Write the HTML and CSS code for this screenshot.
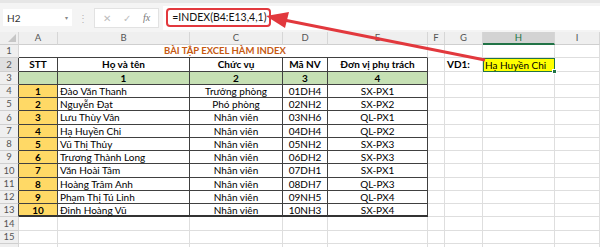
FILE: index.html
```html
<!DOCTYPE html>
<html lang="vi">
<head>
    <meta charset="UTF-8">
    <title>Bài tập Excel hàm INDEX</title>
    <link rel="stylesheet" href="styles.css">
</head>
<body>
    <div class="app">
        <div class="toolbar">
            <div class="namebox"><span>H2</span><span class="caret">▾</span></div>
            <div class="dots">⋮</div>
            <div class="fxbox">
                <span class="btn">✕</span>
                <span class="btn">✓</span>
                <span class="fx">fx</span>
            </div>
            <div class="formula"><span class="mark">=INDEX(B4:E13,4,1)</span></div>
        </div>

        <div class="sheet">
            <!-- column headers -->
            <div class="corner"></div>
            <div class="ch">A</div><div class="ch">B</div><div class="ch">C</div><div class="ch">D</div>
            <div class="ch">E</div><div class="ch">F</div><div class="ch">G</div><div class="ch sel">H</div><div class="ch">I</div>

            <!-- row 1 -->
            <div class="rh">1</div>
            <div class="c title">BÀI TẬP EXCEL HÀM INDEX</div>
            <div class="c"></div><div class="c"></div><div class="c"></div><div class="c"></div>

            <!-- row 2 -->
            <div class="rh dk sel">2</div>
            <div class="c t b mid">STT</div>
            <div class="c t b mid">Họ và tên</div>
            <div class="c t b mid">Chức vụ</div>
            <div class="c t b mid">Mã NV</div>
            <div class="c t b mid">Đơn vị phụ trách</div>
            <div class="c"></div>
            <div class="c b">VD1:</div>
            <div class="c active">Hạ Huyền Chi</div>
            <div class="c"></div>

            <!-- row 3 -->
            <div class="rh dk">3</div>
            <div class="c t green"></div>
            <div class="c t green b mid">1</div>
            <div class="c t green b mid">2</div>
            <div class="c t green b mid">3</div>
            <div class="c t green b mid">4</div>
            <div class="c"></div><div class="c"></div><div class="c"></div><div class="c"></div>

            <!-- rows 4 - 13 -->
            <div class="rh dk">4</div>
            <div class="c t gold b mid">1</div><div class="c t">Đào Văn Thanh</div><div class="c t mid">Trưởng phòng</div><div class="c t mid">01DH4</div><div class="c t mid">SX-PX1</div>
            <div class="c"></div><div class="c"></div><div class="c"></div><div class="c"></div>

            <div class="rh dk">5</div>
            <div class="c t gold b mid">2</div><div class="c t">Nguyễn Đạt</div><div class="c t mid">Phó phòng</div><div class="c t mid">02NH2</div><div class="c t mid">SX-PX2</div>
            <div class="c"></div><div class="c"></div><div class="c"></div><div class="c"></div>

            <div class="rh dk">6</div>
            <div class="c t gold b mid">3</div><div class="c t">Lưu Thùy Vân</div><div class="c t mid">Nhân viên</div><div class="c t mid">03NH6</div><div class="c t mid">QL-PX1</div>
            <div class="c"></div><div class="c"></div><div class="c"></div><div class="c"></div>

            <div class="rh dk">7</div>
            <div class="c t gold b mid">4</div><div class="c t">Hạ Huyền Chi</div><div class="c t mid">Nhân viên</div><div class="c t mid">04DH4</div><div class="c t mid">QL-PX2</div>
            <div class="c"></div><div class="c"></div><div class="c"></div><div class="c"></div>

            <div class="rh dk">8</div>
            <div class="c t gold b mid">5</div><div class="c t">Vũ Thị Thủy</div><div class="c t mid">Nhân viên</div><div class="c t mid">05NH2</div><div class="c t mid">SX-PX3</div>
            <div class="c"></div><div class="c"></div><div class="c"></div><div class="c"></div>

            <div class="rh dk">9</div>
            <div class="c t gold b mid">6</div><div class="c t">Trương Thành Long</div><div class="c t mid">Nhân viên</div><div class="c t mid">06DH2</div><div class="c t mid">SX-PX3</div>
            <div class="c"></div><div class="c"></div><div class="c"></div><div class="c"></div>

            <div class="rh dk">10</div>
            <div class="c t gold b mid">7</div><div class="c t">Văn Hoài Tâm</div><div class="c t mid">Nhân viên</div><div class="c t mid">07DH1</div><div class="c t mid">SX-PX1</div>
            <div class="c"></div><div class="c"></div><div class="c"></div><div class="c"></div>

            <div class="rh dk">11</div>
            <div class="c t gold b mid">8</div><div class="c t">Hoàng Trâm Anh</div><div class="c t mid">Nhân viên</div><div class="c t mid">08DH7</div><div class="c t mid">QL-PX3</div>
            <div class="c"></div><div class="c"></div><div class="c"></div><div class="c"></div>

            <div class="rh dk">12</div>
            <div class="c t gold b mid">9</div><div class="c t">Phạm Thị Tú Linh</div><div class="c t mid">Nhân viên</div><div class="c t mid">09NH5</div><div class="c t mid">QL-PX4</div>
            <div class="c"></div><div class="c"></div><div class="c"></div><div class="c"></div>

            <div class="rh dk">13</div>
            <div class="c t last gold b mid">10</div><div class="c t last">Đinh Hoàng Vũ</div><div class="c t last mid">Nhân viên</div><div class="c t last mid">10NH3</div><div class="c t last mid">SX-PX4</div>
            <div class="c"></div><div class="c"></div><div class="c"></div><div class="c"></div>

            <!-- empty rows -->
            <div class="rh">14</div>
            <div class="c"></div><div class="c"></div><div class="c"></div><div class="c"></div><div class="c"></div>
            <div class="c"></div><div class="c"></div><div class="c"></div><div class="c"></div>

            <div class="rh">15</div>
            <div class="c"></div><div class="c"></div><div class="c"></div><div class="c"></div><div class="c"></div>
            <div class="c"></div><div class="c"></div><div class="c"></div><div class="c"></div>

            <div class="rh"></div>
            <div class="c"></div><div class="c"></div><div class="c"></div><div class="c"></div><div class="c"></div>
            <div class="c"></div><div class="c"></div><div class="c"></div><div class="c"></div>
        </div>

        <!-- red arrow pointing to the formula -->
        <svg class="arrow" width="600" height="247" viewBox="0 0 600 247">
            <line x1="485" y1="60" x2="284" y2="20" stroke="#e2383d" stroke-width="3"/>
            <polygon points="266,16 289,12 285,28" fill="#e2383d"/>
        </svg>
    </div>
</body>
</html>
```

FILE: styles.css
```css
body {
    margin: 0;
    background-color: #fff;
    font-family: Lato, "Noto Sans", sans-serif;
    color: #000;
}

.app {
    position: relative;
    width: 600px;
    height: 247px;
    overflow: hidden;
}

/* Thanh công thức */
.toolbar {
    height: 32px;
    display: flex;
    align-items: center;
    background-color: #f4f4f4;
    border-top: 3px solid #e6e6e6;
    box-sizing: border-box;
}

.namebox {
    width: 69px;
    height: 17px;
    margin-left: 3px;
    background-color: #fff;
    display: flex;
    align-items: center;
    justify-content: space-between;
    padding: 0 4px;
    box-sizing: border-box;
    font-size: 10px;
    color: #333;
}

.caret {
    font-size: 6px;
    color: #888;
}

.dots {
    width: 22px;
    text-align: center;
    color: #b5b5b5;
    font-size: 10px;
}

.fxbox {
    height: 18px;
    display: flex;
    align-items: center;
    gap: 12px;
    padding: 0 8px;
    background-color: #fff;
    border: 1px solid #e2e2e2;
    color: #bdbdbd;
    font-size: 10px;
}

.fx {
    font-family: "Liberation Serif", serif;
    font-style: italic;
    color: #777;
}

.formula {
    flex: 1;
    height: 24px;
    margin-left: 4px;
    background-color: #fff;
    display: flex;
    align-items: center;
    padding-left: 3px;
}

.mark {
    border: 2.5px solid #e2383d;
    border-radius: 4px;
    padding: 1px 3px 2px 4px;
    font-size: 10.5px;
    color: #111;
}

/* Bảng tính */
.sheet {
    display: grid;
    grid-template-columns: 19px 39px 132px 93px 45px 100px 17px 38px 72px 45px;
    grid-template-rows: 13px repeat(16, 13.25px);
    font-size: 10px;
    line-height: 1;
}

.corner,
.ch,
.rh {
    background-color: #efefef;
    color: #555;
    border-right: 1px solid #d6d6d6;
    border-bottom: 1px solid #cfcfcf;
    box-sizing: border-box;
    display: flex;
    align-items: center;
    justify-content: center;
    font-size: 9.5px;
}

.corner {
    position: relative;
}

.corner::after {
    content: "";
    position: absolute;
    right: 2px;
    bottom: 2px;
    border-left: 8px solid transparent;
    border-bottom: 8px solid #c6c6c6;
}

.ch.sel {
    background-color: #d3d3d3;
    border-bottom: 2px solid #217346;
    color: #217346;
}

.rh.sel {
    background-color: #e0e0e0;
}

.rh.dk {
    border-right-color: #404040;
}

.c {
    border-right: 1px solid #dedede;
    border-bottom: 1px solid #dedede;
    box-sizing: border-box;
    display: flex;
    align-items: center;
    padding: 0 2px;
    white-space: nowrap;
}

.c.t {
    border-right-color: #404040;
    border-bottom-color: #404040;
}

.c.last {
    border-bottom: 2px solid #333;
}

.mid {
    justify-content: center;
}

.b {
    font-weight: bold;
}

.title {
    grid-column: span 5;
    justify-content: center;
    padding-left: 6px;
    font-weight: bold;
    font-size: 9.5px;
    color: #c65911;
    border-bottom-color: #404040;
}

.green {
    background-color: #c6e0b4;
}

.gold {
    background-color: #ffd966;
}

.active {
    position: relative;
    background-color: #ffff00;
    border: 1.5px solid #217346;
    padding-left: 1px;
}

.active::after {
    content: "";
    position: absolute;
    right: -3px;
    bottom: -3px;
    width: 3px;
    height: 3px;
    background-color: #217346;
    border: 1px solid #fff;
}

.arrow {
    position: absolute;
    top: 0;
    left: 0;
    pointer-events: none;
}
```
